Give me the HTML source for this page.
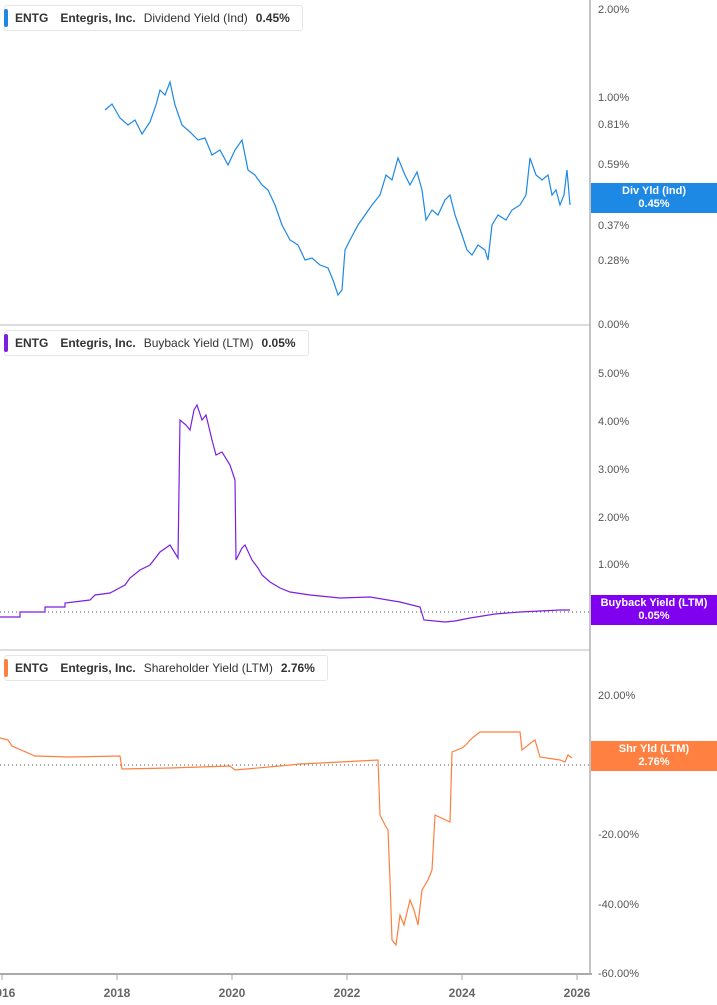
<!DOCTYPE html>
<html><head><meta charset="utf-8"><style>
body{margin:0;width:717px;height:1005px;background:#fff;overflow:hidden;font-family:"Liberation Sans",sans-serif}
svg{position:absolute;left:0;top:0}
.lab{position:absolute;left:4px;height:24px;border:1px solid #e6e6e6;border-radius:3px;background:#fff;font-size:12px;font-weight:bold;color:#333;line-height:24px;padding:0 12px 0 10px;white-space:nowrap}
.lab i{position:absolute;left:-1px;top:3px;width:4px;height:18px;border-radius:2px}
.lab span{font-weight:normal;margin-left:8px}
.tag{position:absolute;left:591px;width:126px;color:#fff;font-size:11px;font-weight:bold;text-align:center;line-height:13px;padding-top:2px}
</style></head><body>
<svg width="717" height="1005" font-family="Liberation Sans" font-size="11" fill="#555">
<line x1="590" y1="0" x2="590" y2="974" stroke="#888"/>
<line x1="0" y1="325" x2="590" y2="325" stroke="#bbb"/>
<line x1="0" y1="650" x2="590" y2="650" stroke="#bbb"/>
<line x1="0" y1="974" x2="592" y2="974" stroke="#aaa" stroke-width="2"/>
<g stroke="#aaa"><line x1="2" y1="974" x2="2" y2="980"/><line x1="117" y1="974" x2="117" y2="980"/><line x1="232" y1="974" x2="232" y2="980"/><line x1="347" y1="974" x2="347" y2="980"/><line x1="462" y1="974" x2="462" y2="980"/><line x1="577" y1="974" x2="577" y2="980"/></g>
<g font-weight="bold" font-size="12" fill="#666" text-anchor="middle"><text x="2" y="997">2016</text><text x="117" y="997">2018</text><text x="232" y="997">2020</text><text x="347" y="997">2022</text><text x="462" y="997">2024</text><text x="577" y="997">2026</text></g>
<g><text x="598" y="13">2.00%</text><text x="598" y="101">1.00%</text><text x="598" y="128">0.81%</text><text x="598" y="168">0.59%</text><text x="598" y="229">0.37%</text><text x="598" y="264">0.28%</text><text x="598" y="328">0.00%</text>
<text x="598" y="377">5.00%</text><text x="598" y="425">4.00%</text><text x="598" y="473">3.00%</text><text x="598" y="521">2.00%</text><text x="598" y="568">1.00%</text>
<text x="598" y="699">20.00%</text><text x="598" y="838">-20.00%</text><text x="598" y="908">-40.00%</text><text x="598" y="977">-60.00%</text></g>
<line x1="0" y1="612" x2="590" y2="612" stroke="#555" stroke-dasharray="1,3"/>
<line x1="0" y1="765" x2="590" y2="765" stroke="#555" stroke-dasharray="1,3"/>
<polyline fill="none" stroke="#1e88e5" stroke-width="1.2" points="105,110 112,104 120,118 128,125 135,120 142,134 150,122 156,105 160,90 165,95 170,82 175,105 182,125 190,132 198,140 205,138 212,155 220,150 228,165 235,150 242,140 248,170 255,175 262,185 268,190 275,205 282,225 290,240 298,245 305,260 312,258 320,265 328,268 333,280 338,295 342,290 345,250 350,240 358,225 365,215 372,205 380,195 386,175 392,180 398,158 405,175 410,185 417,172 422,190 426,220 432,210 438,215 445,200 450,195 455,215 462,235 467,250 472,255 478,245 485,250 488,260 492,225 498,215 506,220 512,210 520,205 526,195 530,158 536,175 542,180 548,175 552,195 556,190 560,205 564,195 567,170 570,205"/>
<polyline fill="none" stroke="#7b1fe0" stroke-width="1.2" points="0,617 20,617 20,612 45,612 45,607 65,607 65,603 90,600 95,595 110,593 125,585 130,578 140,570 150,565 160,552 170,545 178,558 180,420 186,425 190,430 194,410 197,405 202,420 206,415 212,440 216,455 222,452 230,465 235,480 236,560 242,548 245,545 252,560 258,568 262,575 270,582 280,588 290,592 310,595 340,598 370,597 400,602 420,607 424,620 445,622 455,621 470,618 495,614 520,612 560,610 570,610"/>
<polyline fill="none" stroke="#ff7f3f" stroke-width="1.2" points="0,738 8,740 12,746 35,756 70,757 120,756 122,769 170,768 230,766 235,770 280,766 300,764 340,762 378,760 380,815 385,825 388,830 390,880 392,940 396,945 400,915 404,925 410,900 414,910 418,925 422,890 428,880 432,870 435,815 450,822 452,752 462,748 466,745 470,740 476,735 480,732 520,732 522,750 532,742 535,740 540,757 560,760 565,762 568,755 572,758"/>
</svg>
<div class="lab" style="top:5px"><i style="background:#1e88e5"></i>ENTG<span style="font-weight:bold;margin-left:12px">Entegris, Inc.</span><span>Dividend Yield (Ind)</span><span style="font-weight:bold">0.45%</span></div>
<div class="lab" style="top:330px"><i style="background:#7b1fe0"></i>ENTG<span style="font-weight:bold;margin-left:12px">Entegris, Inc.</span><span>Buyback Yield (LTM)</span><span style="font-weight:bold">0.05%</span></div>
<div class="lab" style="top:655px"><i style="background:#ff7f3f"></i>ENTG<span style="font-weight:bold;margin-left:12px">Entegris, Inc.</span><span>Shareholder Yield (LTM)</span><span style="font-weight:bold">2.76%</span></div>
<div class="tag" style="top:183px;height:28px;background:#1e88e5">Div Yld (Ind)<br>0.45%</div>
<div class="tag" style="top:595px;height:28px;background:#8000f0">Buyback Yield (LTM)<br>0.05%</div>
<div class="tag" style="top:741px;height:28px;background:#ff8040">Shr Yld (LTM)<br>2.76%</div>
</body></html>
